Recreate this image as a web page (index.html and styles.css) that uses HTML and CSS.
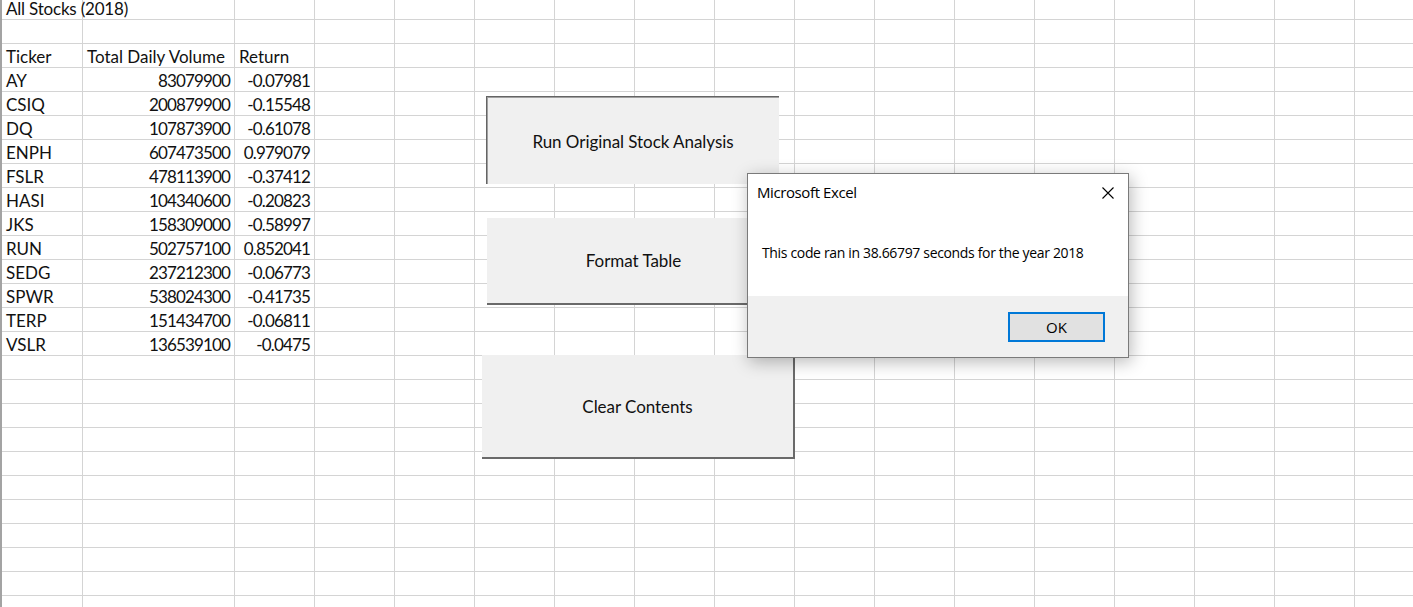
FILE: index.html
```html
<!DOCTYPE html>
<html lang="en">
<head>
<meta charset="utf-8">
<title>All Stocks (2018)</title>
<link rel="stylesheet" href="styles.css">
</head>
<body>
<div class="sheet">
  <div class="data">
    <div class="cell title">All Stocks (2018)</div>
    <div class="cell"></div><div class="cell"></div><div class="cell"></div>
    <div class="cell">Ticker</div><div class="cell">Total Daily Volume</div><div class="cell">Return</div>
    <div class="cell">AY</div><div class="cell num">83079900</div><div class="cell num">-0.07981</div>
    <div class="cell">CSIQ</div><div class="cell num">200879900</div><div class="cell num">-0.15548</div>
    <div class="cell">DQ</div><div class="cell num">107873900</div><div class="cell num">-0.61078</div>
    <div class="cell">ENPH</div><div class="cell num">607473500</div><div class="cell num">0.979079</div>
    <div class="cell">FSLR</div><div class="cell num">478113900</div><div class="cell num">-0.37412</div>
    <div class="cell">HASI</div><div class="cell num">104340600</div><div class="cell num">-0.20823</div>
    <div class="cell">JKS</div><div class="cell num">158309000</div><div class="cell num">-0.58997</div>
    <div class="cell">RUN</div><div class="cell num">502757100</div><div class="cell num">0.852041</div>
    <div class="cell">SEDG</div><div class="cell num">237212300</div><div class="cell num">-0.06773</div>
    <div class="cell">SPWR</div><div class="cell num">538024300</div><div class="cell num">-0.41735</div>
    <div class="cell">TERP</div><div class="cell num">151434700</div><div class="cell num">-0.06811</div>
    <div class="cell">VSLR</div><div class="cell num">136539100</div><div class="cell num">-0.0475</div>
  </div>
  <div class="rest"></div>

  <div class="shape btn-run">Run Original Stock Analysis</div>
  <div class="shape btn-format">Format Table</div>
  <div class="shape btn-clear">Clear Contents</div>

  <div class="dlg">
    <div class="dlg-head">
      <span class="dlg-title">Microsoft Excel</span>
      <svg class="dlg-close" width="12" height="12" viewBox="0 0 12 12"><path d="M0.5 0.5 L11.5 11.5 M11.5 0.5 L0.5 11.5" stroke="#000" stroke-width="1.1" fill="none"/></svg>
    </div>
    <div class="dlg-body">This code ran in 38.66797 seconds for the year 2018</div>
    <div class="dlg-foot"><div class="dlg-ok">OK</div></div>
  </div>
</div>
</body>
</html>
```
FILE: styles.css
```css
html, body {
  margin: 0;
  padding: 0;
  background: #fff;
  overflow: hidden;
}

.sheet {
  position: relative;
  display: flex;
  width: 1413px;
  height: 607px;
  border-left: 2px solid #a3a3a3;
  box-sizing: border-box;
  overflow: hidden;
  background: repeating-linear-gradient(to bottom, transparent 0 23px, #d4d4d4 23px 24px) 0 -4px;
  font-family: Lato, "Noto Sans", sans-serif;
  color: #000;
}

.data {
  flex: 0 0 313px;
  display: grid;
  grid-template-columns: 81px 152px 80px;
  grid-template-rows: 20px;
  grid-auto-rows: 24px;
  align-content: start;
  background:
    linear-gradient(#d4d4d4, #d4d4d4) 80px 0 / 1px 100% no-repeat,
    linear-gradient(#d4d4d4, #d4d4d4) 232px 0 / 1px 100% no-repeat,
    linear-gradient(#d4d4d4, #d4d4d4) 312px 0 / 1px 100% no-repeat;
}

.rest {
  flex: 1 1 auto;
  background: repeating-linear-gradient(to right, transparent 0 79px, #d4d4d4 79px 80px);
}

.cell {
  font-size: 17px;
  letter-spacing: 0;
  line-height: 23px;
  padding: 1px 4px 0 4px;
  white-space: nowrap;
  overflow: visible;
  color: #111;
}

.cell.title {
  grid-column: 1 / span 3;
  line-height: 15px;
  padding-top: 1px;
  letter-spacing: -0.2px;
}

.cell.num {
  text-align: right;
  letter-spacing: -0.85px;
  padding-right: 5px;
}

.shape {
  position: absolute;
  display: flex;
  align-items: center;
  justify-content: center;
  background: #f0f0f0;
  box-sizing: border-box;
  font-size: 17px;
  letter-spacing: -0.05px;
  color: #111;
}

.btn-run {
  left: 484px;
  top: 96px;
  width: 293px;
  height: 88px;
  border-top: 1px solid #646464;
  border-left: 1px solid #646464;
  box-shadow: inset 1px 1px 0 #a0a0a0;
  padding-top: 1px;
}

.btn-format {
  left: 485px;
  top: 218px;
  width: 293px;
  height: 87px;
  border-bottom: 2px solid #6a6a6a;
}

.btn-clear {
  left: 480px;
  top: 355px;
  width: 313px;
  height: 104px;
  border-right: 2px solid #6a6a6a;
  border-bottom: 2px solid #6a6a6a;
}

.dlg {
  position: absolute;
  left: 745px;
  top: 173px;
  width: 382px;
  height: 185px;
  box-sizing: border-box;
  border: 1px solid #7a7a7a;
  background: #fff;
  box-shadow: 2px 4px 16px rgba(0, 0, 0, 0.28);
  display: flex;
  flex-direction: column;
  font-family: "Open Sans", "Noto Sans", sans-serif;
  color: #000;
}

.dlg-head {
  height: 34px;
  box-sizing: border-box;
  padding: 8px 14px 0 9px;
  display: flex;
  align-items: flex-start;
}

.dlg-title {
  font-size: 15px;
  line-height: 20px;
  letter-spacing: -0.4px;
}

.dlg-close {
  margin-left: auto;
  margin-top: 5px;
}

.dlg-body {
  flex: 1 1 auto;
  padding: 35px 0 0 14px;
  font-size: 14px;
  line-height: 19px;
  letter-spacing: -0.34px;
}

.dlg-foot {
  height: 61px;
  background: #f0f0f0;
  display: flex;
  justify-content: flex-end;
  align-items: flex-start;
  padding: 16px 23px 0 0;
  box-sizing: border-box;
}

.dlg-ok {
  width: 97px;
  height: 30px;
  box-sizing: border-box;
  border: 2px solid #0078d7;
  background: #e1e1e1;
  display: flex;
  align-items: center;
  justify-content: center;
  font-size: 15px;
}
```
